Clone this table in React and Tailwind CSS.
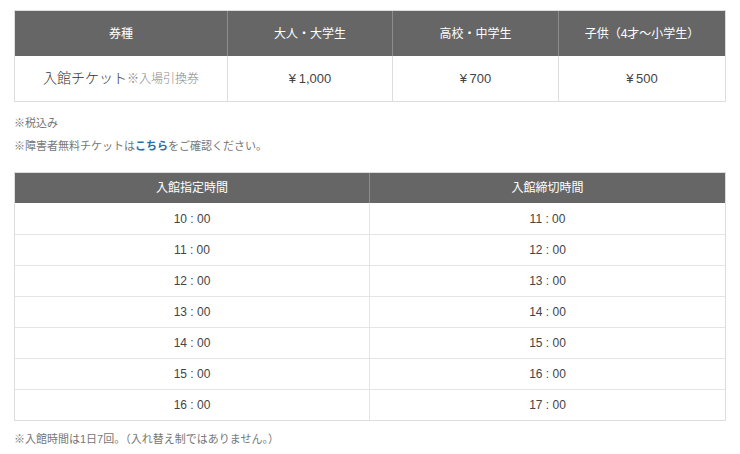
import React from "react";

const prices = [
  { label: "大人・大学生", price: "¥\u20091,000" },
  { label: "高校・中学生", price: "¥\u2009700" },
  { label: "子供（4才～小学生）", price: "¥\u2009500" },
];

const times = [
  ["10 : 00", "11 : 00"],
  ["11 : 00", "12 : 00"],
  ["12 : 00", "13 : 00"],
  ["13 : 00", "14 : 00"],
  ["14 : 00", "15 : 00"],
  ["15 : 00", "16 : 00"],
  ["16 : 00", "17 : 00"],
];

const App = () => {
  return (
    <div className="w-[740px] h-[454px] bg-white px-[14px] pt-[10px] font-['Liberation_Sans','Noto_Sans_CJK_JP',sans-serif] text-[#444]">
      {/* price table */}
      <div className="w-[712px] border border-[#ddd]">
        <div className="grid grid-cols-[213px_165px_166px_1fr] bg-[#666] text-white text-[12px] h-[45px]">
          <div className="flex items-center justify-center border-r border-[#8c8c8c]">券種</div>
          {prices.map((p, i) => (
            <div
              key={p.label}
              className={`flex items-center justify-center ${i < 2 ? "border-r border-[#8c8c8c]" : ""}`}
            >
              {p.label}
            </div>
          ))}
        </div>
        <div className="grid grid-cols-[213px_165px_166px_1fr] h-[45px] text-[13px]">
          <div className="flex items-center justify-center border-r border-[#ddd]">
            <span className="text-[14px] font-light text-[#333]">入館チケット</span>
            <span className="text-[12px] font-light text-[#888]">※入場引換券</span>
          </div>
          {prices.map((p, i) => (
            <div
              key={p.price}
              className={`flex items-center justify-center ${i < 2 ? "border-r border-[#ddd]" : ""}`}
            >
              {p.price}
            </div>
          ))}
        </div>
      </div>

      <div className="mt-[10px] text-[11px] leading-[23px] text-[#777]">
        <p>※税込み</p>
        <p>
          ※障害者無料チケットは
          <span className="font-bold text-[#1f6fb2]">こちら</span>
          をご確認ください。
        </p>
      </div>

      {/* time table */}
      <div className="mt-[14px] w-[712px] border border-[#ddd]">
        <div className="grid grid-cols-[355px_1fr] bg-[#666] text-white text-[12px] h-[30px]">
          <div className="flex items-center justify-center border-r border-[#8c8c8c]">入館指定時間</div>
          <div className="flex items-center justify-center">入館締切時間</div>
        </div>
        {times.map(([a, b], i) => (
          <div
            key={a}
            className={`grid grid-cols-[355px_1fr] h-[31px] text-[12px] ${i > 0 ? "border-t border-[#e5e5e5]" : ""}`}
          >
            <div className="flex items-center justify-center border-r border-[#e5e5e5]">{a}</div>
            <div className="flex items-center justify-center">{b}</div>
          </div>
        ))}
      </div>

      <p className="mt-[8px] text-[11px] leading-[20px] text-[#777]">
        ※入館時間は1日7回。（入れ替え制ではありません。）
      </p>
    </div>
  );
};

export default App;
